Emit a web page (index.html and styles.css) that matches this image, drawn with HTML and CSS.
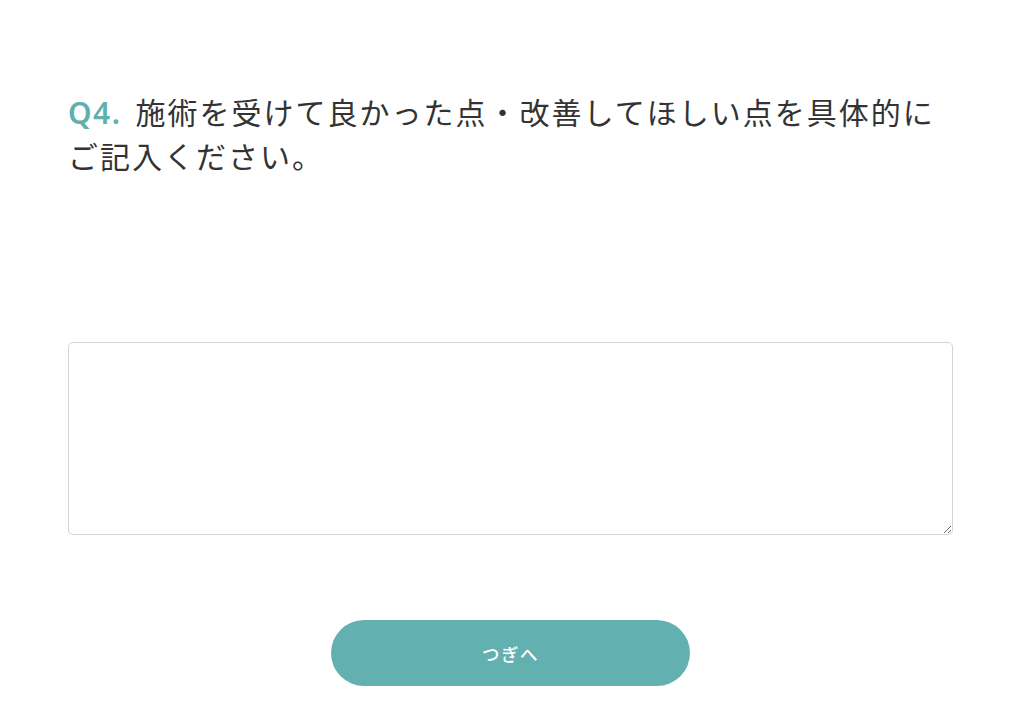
FILE: index.html
```html
<!DOCTYPE html>
<html lang="ja">
<head>
<meta charset="utf-8">
<link rel="stylesheet" href="styles.css">
</head>
<body>
<main class="page">
  <section class="question">
    <h2 class="q-title"><span class="q-num">Q4.</span>施術を受けて良かった点・改善してほしい点を具体的にご記入ください。</h2>
    <textarea class="answer"></textarea>
    <div class="actions">
      <button class="next" type="button">つぎへ</button>
    </div>
  </section>
</main>
</body>
</html>
```

FILE: styles.css
```css
html, body {
  margin: 0;
  padding: 0;
  background: #ffffff;
}
body {
  font-family: "Noto Sans CJK JP", "Noto Sans", sans-serif;
  color: #333333;
}
.page {
  width: 885px;
  margin: 0 0 0 68px;
  padding-top: 90px;
}
.question {
  display: flex;
  flex-direction: column;
}
.q-title {
  margin: 0;
  font-size: 30px;
  font-weight: 400;
  line-height: 42px;
  letter-spacing: 2px;
  width: 880px;
}
.q-num {
  display: inline-block;
  margin-right: 14px;
  color: #5fb0ae;
  font-family: "Noto Sans", "Lato", sans-serif;
  font-size: 30px;
  font-weight: 600;
  letter-spacing: 1.5px;
}
.answer {
  margin-top: 166px;
  box-sizing: border-box;
  width: 885px;
  height: 193px;
  border: 1px solid #d4d4d4;
  border-radius: 5px;
  background: #fff;
  resize: vertical;
  font: inherit;
  display: block;
}
.actions {
  display: flex;
  justify-content: center;
  margin-top: 85px;
}
.next {
  width: 359px;
  height: 66px;
  border: none;
  border-radius: 33px;
  background: #62b0b0;
  color: #ffffff;
  font-family: "Noto Sans CJK JP", sans-serif;
  font-size: 17.5px;
  font-weight: 500;
  letter-spacing: 1.5px;
  cursor: pointer;
}
```
